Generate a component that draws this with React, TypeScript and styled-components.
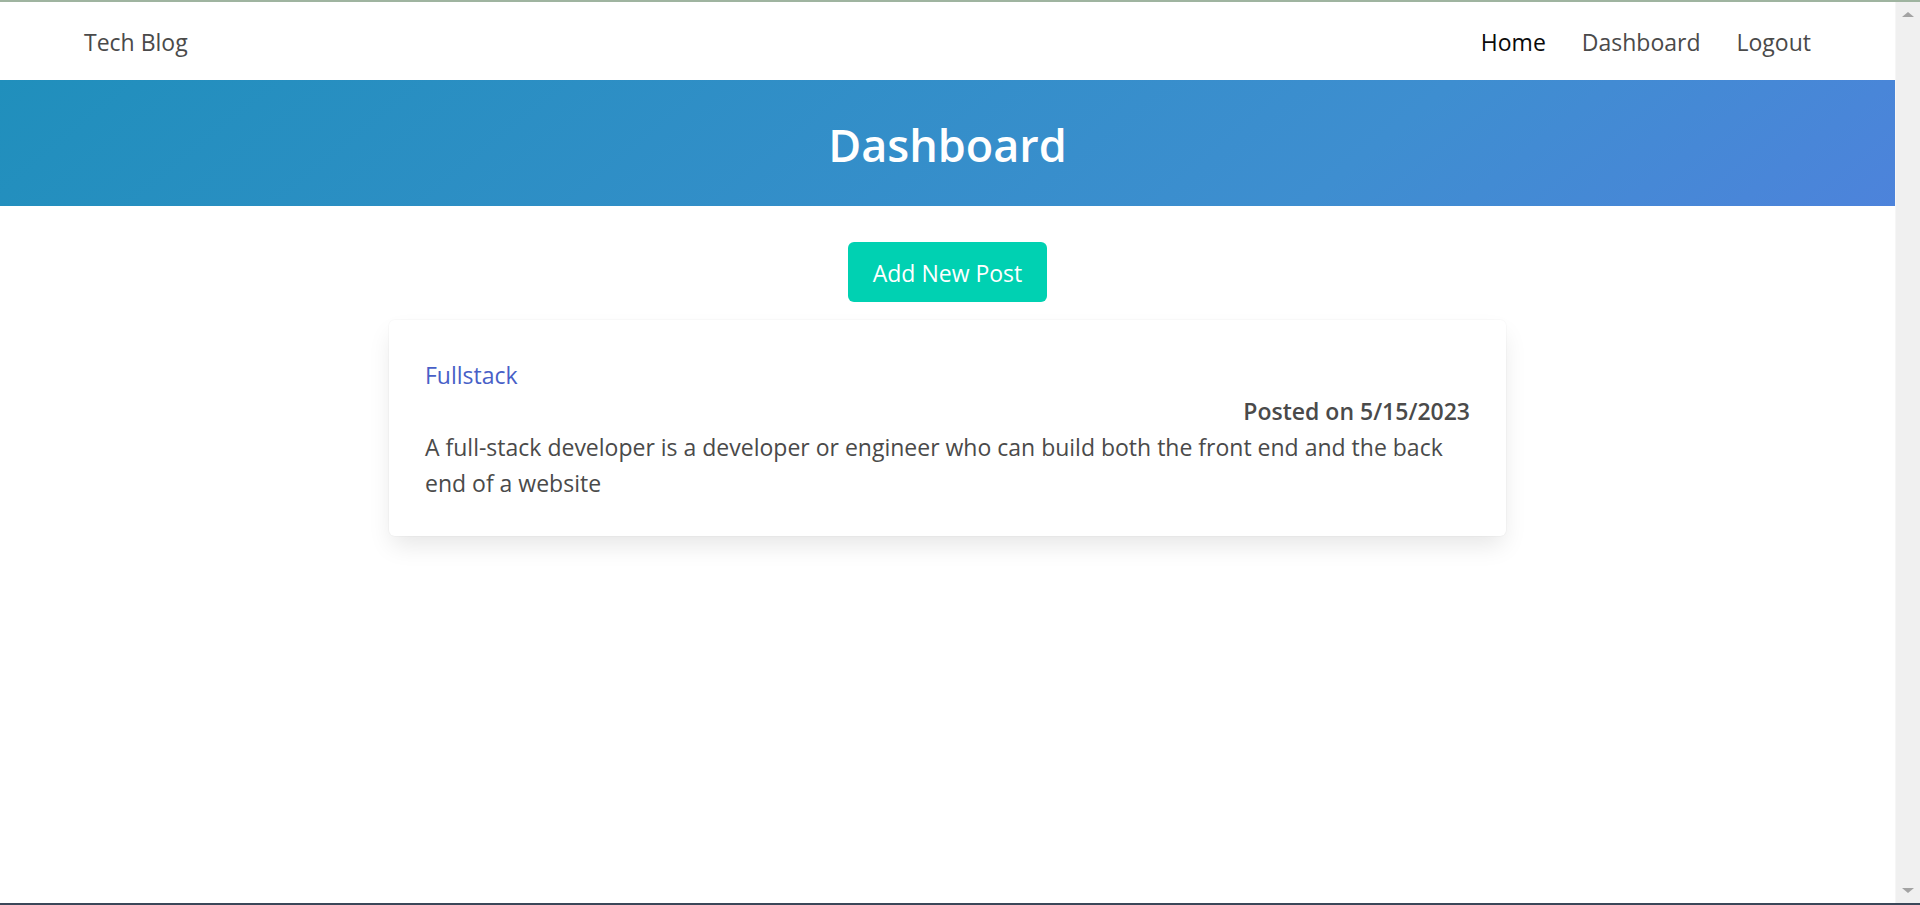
import React from "react";
import styled, { createGlobalStyle } from "styled-components";

const GlobalStyle = createGlobalStyle`
  html, body {
    margin: 0;
    padding: 0;
    height: 100%;
    overflow: hidden;
  }
  body {
    font-family: "Open Sans", "Noto Sans", sans-serif;
    color: #4a4a4a;
    background: #ffffff;
  }
  * { box-sizing: border-box; }
`;

const Frame = styled.div`
  height: 905px;
  display: flex;
  flex-direction: column;
`;

const TopEdge = styled.div`
  height: 2px;
  flex: none;
  background: #9fb4a0;
`;

const BottomEdge = styled.div`
  height: 2px;
  flex: none;
  background: #3b4759;
`;

const Viewport = styled.div`
  flex: 1;
  display: flex;
  min-height: 0;
`;

const Page = styled.div`
  flex: 1;
  display: flex;
  flex-direction: column;
  background: #ffffff;
`;

const Scrollbar = styled.div`
  width: 25px;
  flex: none;
  background: #f0f0f0;
  border-left: 1px solid #f6f6f6;
  display: flex;
  flex-direction: column;
  justify-content: space-between;
  align-items: center;
  padding: 10px 0 10px;
`;

const Arrow = styled.div<{ $down?: boolean }>`
  width: 0;
  height: 0;
  border-left: 6px solid transparent;
  border-right: 6px solid transparent;
  ${(p) =>
    p.$down
      ? "border-top: 5px solid #a3a3a3;"
      : "border-bottom: 5px solid #a3a3a3;"}
`;

const Navbar = styled.nav`
  height: 78px;
  flex: none;
  display: flex;
  align-items: center;
  justify-content: space-between;
  padding: 2px 66px 0;
`;

const NavItem = styled.a<{ $active?: boolean }>`
  font-size: 23px;
  line-height: 36px;
  padding: 0 18px;
  color: ${(p) => (p.$active ? "#0a0a0a" : "#4a4a4a")};
  text-decoration: none;
  cursor: pointer;
`;

const NavMenu = styled.div`
  display: flex;
  align-items: center;
`;

const Hero = styled.header`
  flex: none;
  height: 126px;
  display: flex;
  align-items: center;
  justify-content: center;
  padding-top: 4px;
  background: linear-gradient(141deg, #208fbc 0%, #3e8ed0 71%, #4d83db 100%);
`;

const Title = styled.h1`
  margin: 0;
  font-size: 45px;
  line-height: 54px;
  font-weight: 600;
  color: #ffffff;
`;

const Section = styled.main`
  display: flex;
  flex-direction: column;
  align-items: center;
  padding-top: 36px;
  gap: 18px;
`;

const Button = styled.button`
  width: 199px;
  height: 60px;
  border: none;
  border-radius: 6px;
  background: #00d1b2;
  color: #ffffff;
  font-family: inherit;
  font-size: 23px;
  padding: 2px 0 0;
  cursor: pointer;
`;

const Card = styled.article`
  width: 1117px;
  background: #ffffff;
  border-radius: 6px;
  padding: 37px 36px 35px;
  box-shadow: 0 12px 24px -3px rgba(10, 10, 10, 0.1),
    0 0 0 1px rgba(10, 10, 10, 0.02);
  font-size: 23px;
  line-height: 36px;
  color: #4a4a4a;
`;

const PostLink = styled.a`
  display: block;
  color: #485fc7;
  text-decoration: none;
`;

const PostDate = styled.div`
  text-align: right;
  font-weight: 600;
`;

const PostBody = styled.p`
  margin: 0;
`;

export default function App() {
  return (
    <>
      <GlobalStyle />
      <Frame>
        <TopEdge />
        <Viewport>
          <Page>
            <Navbar>
              <NavItem>Tech Blog</NavItem>
              <NavMenu>
                <NavItem $active>Home</NavItem>
                <NavItem>Dashboard</NavItem>
                <NavItem>Logout</NavItem>
              </NavMenu>
            </Navbar>
            <Hero>
              <Title>Dashboard</Title>
            </Hero>
            <Section>
              <Button>Add New Post</Button>
              <Card>
                <PostLink>Fullstack</PostLink>
                <PostDate>Posted on 5/15/2023</PostDate>
                <PostBody>
                  A full-stack developer is a developer or engineer who can
                  build both the front end and the back end of a website
                </PostBody>
              </Card>
            </Section>
          </Page>
          <Scrollbar>
            <Arrow />
            <Arrow $down />
          </Scrollbar>
        </Viewport>
        <BottomEdge />
      </Frame>
    </>
  );
}
